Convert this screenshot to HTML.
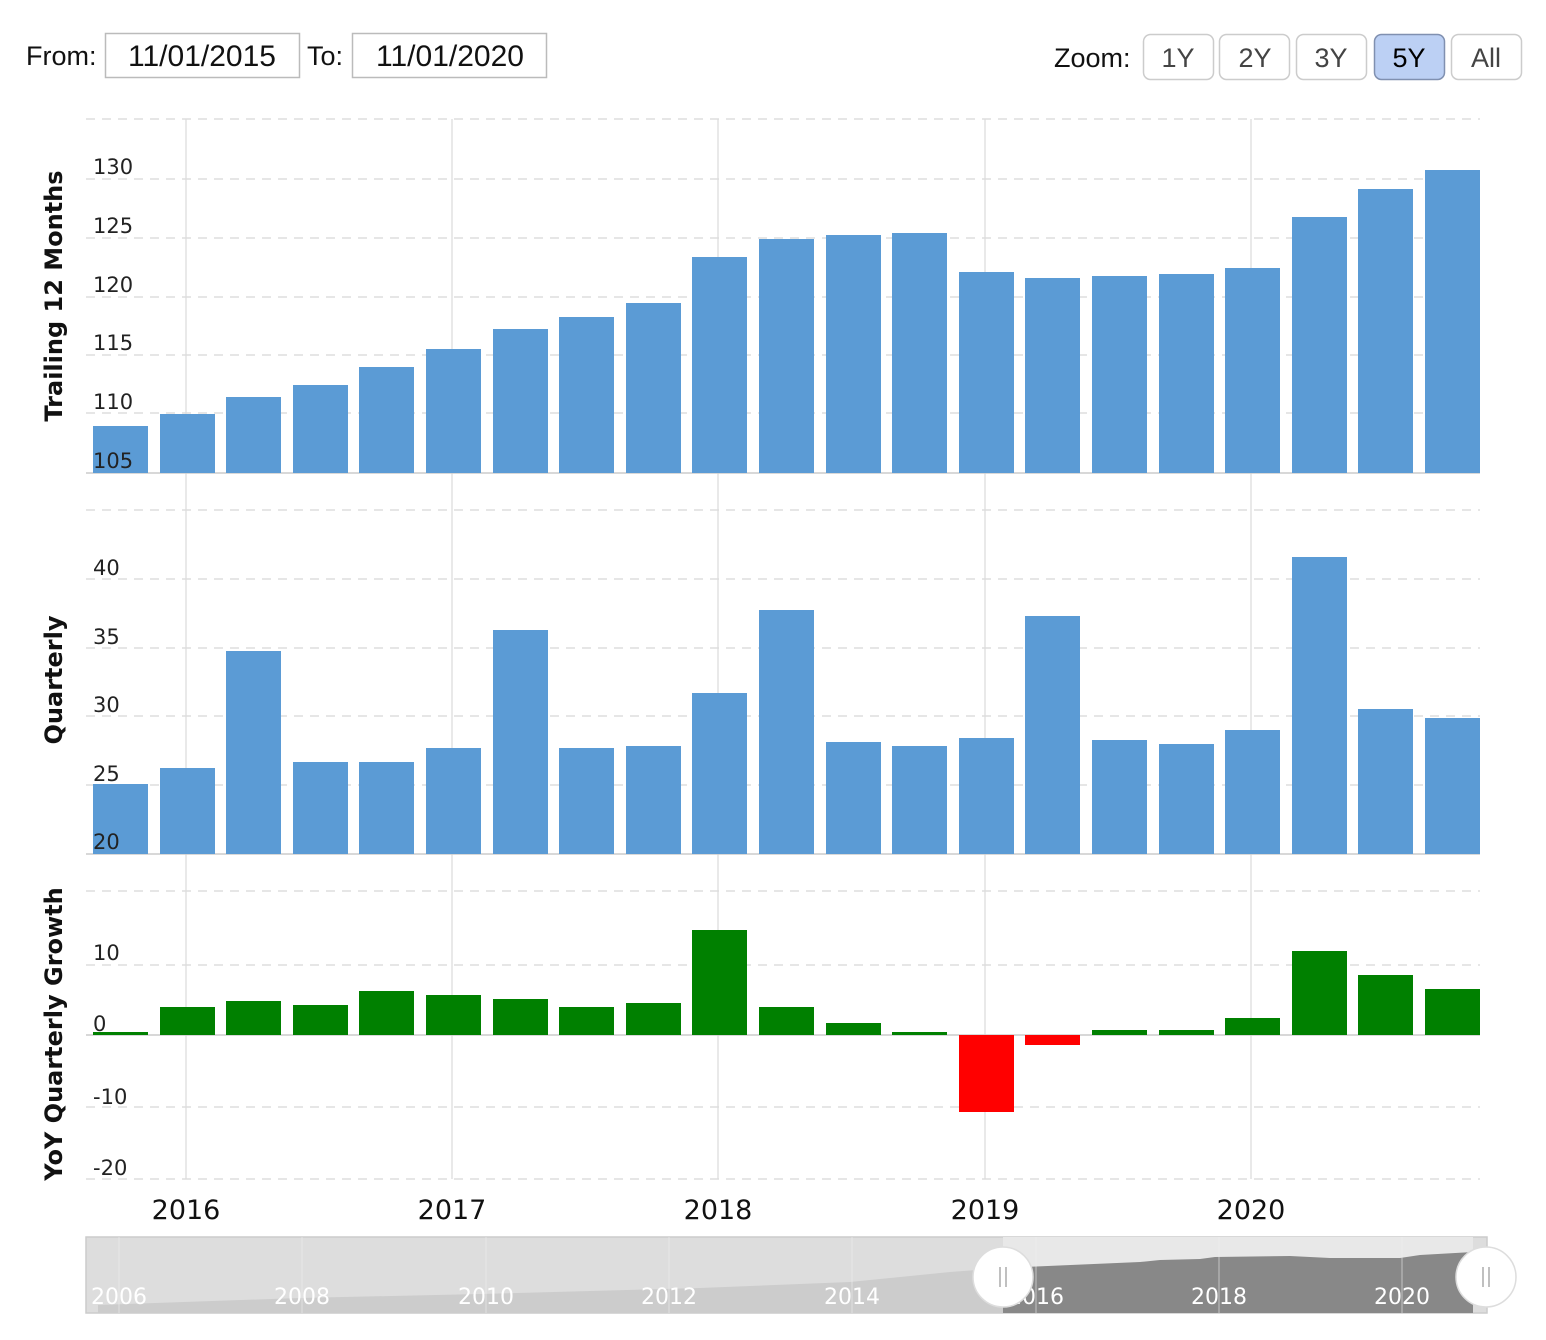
<!DOCTYPE html>
<html><head><meta charset="utf-8"><style>
html,body{margin:0;padding:0;background:#fff;width:1546px;height:1340px;overflow:hidden}
svg{display:block}
</style></head><body>
<svg width="1546" height="1340" xmlns="http://www.w3.org/2000/svg" font-family="'DejaVu Sans',Verdana,sans-serif">
<g font-family="'Liberation Sans',Arial,sans-serif" font-size="27">
<text x="26" y="65" fill="#111">From:</text>
<rect x="105.5" y="33.5" width="194" height="44" fill="#fff" stroke="#bbb" stroke-width="1.5"/>
<text x="202" y="66" text-anchor="middle" fill="#111" font-size="30">11/01/2015</text>
<text x="307" y="65" fill="#111">To:</text>
<rect x="352.5" y="33.5" width="194" height="44" fill="#fff" stroke="#bbb" stroke-width="1.5"/>
<text x="450" y="66" text-anchor="middle" fill="#111" font-size="30">11/01/2020</text>
<text x="1054" y="67" fill="#111">Zoom:</text>
<g stroke="#ccc" stroke-width="1.5" fill="#fff">
<rect x="1143.5" y="34.5" width="70" height="45" rx="7"/>
<rect x="1219.5" y="34.5" width="70" height="45" rx="7"/>
<rect x="1296.5" y="34.5" width="70" height="45" rx="7"/>
<rect x="1374.5" y="34.5" width="70" height="45" rx="7" fill="#bcd0f4" stroke="#8090b0"/>
<rect x="1451.5" y="34.5" width="70" height="45" rx="7"/>
</g>
<g text-anchor="middle" fill="#444">
<text x="1178" y="67">1Y</text><text x="1255" y="67">2Y</text><text x="1331" y="67">3Y</text>
<text x="1409" y="67" fill="#000">5Y</text><text x="1486" y="67">All</text>
</g>
</g>
<g stroke="#e2e2e2" stroke-width="1.5">
<line x1="186" y1="119" x2="186" y2="1179"/><line x1="452" y1="119" x2="452" y2="1179"/>
<line x1="718" y1="119" x2="718" y2="1179"/><line x1="985" y1="119" x2="985" y2="1179"/>
<line x1="1251" y1="119" x2="1251" y2="1179"/>
</g>
<g stroke="#ddd" stroke-width="1.5" stroke-dasharray="9,7">
<line x1="86" y1="119" x2="1480" y2="119"/><line x1="86" y1="179" x2="1480" y2="179"/>
<line x1="86" y1="238" x2="1480" y2="238"/><line x1="86" y1="297" x2="1480" y2="297"/>
<line x1="86" y1="355" x2="1480" y2="355"/><line x1="86" y1="413" x2="1480" y2="413"/>
<line x1="86" y1="510" x2="1480" y2="510"/><line x1="86" y1="579" x2="1480" y2="579"/>
<line x1="86" y1="648" x2="1480" y2="648"/><line x1="86" y1="716" x2="1480" y2="716"/>
<line x1="86" y1="785" x2="1480" y2="785"/>
<line x1="86" y1="891" x2="1480" y2="891"/><line x1="86" y1="965" x2="1480" y2="965"/>
<line x1="86" y1="1107" x2="1480" y2="1107"/><line x1="86" y1="1179" x2="1480" y2="1179"/>
</g>
<g stroke="#ccc" stroke-width="1.5"><line x1="86" y1="473" x2="1480" y2="473"/><line x1="86" y1="854" x2="1480" y2="854"/><line x1="86" y1="1035" x2="1480" y2="1035"/></g>
<g fill="#5b9bd5">
<rect x="93" y="426" width="55" height="47"/><rect x="160" y="414" width="55" height="59"/>
<rect x="226" y="397" width="55" height="76"/><rect x="293" y="385" width="55" height="88"/>
<rect x="359" y="367" width="55" height="106"/><rect x="426" y="349" width="55" height="124"/>
<rect x="493" y="329" width="55" height="144"/><rect x="559" y="317" width="55" height="156"/>
<rect x="626" y="303" width="55" height="170"/><rect x="692" y="257" width="55" height="216"/>
<rect x="759" y="239" width="55" height="234"/><rect x="826" y="235" width="55" height="238"/>
<rect x="892" y="233" width="55" height="240"/><rect x="959" y="272" width="55" height="201"/>
<rect x="1025" y="278" width="55" height="195"/><rect x="1092" y="276" width="55" height="197"/>
<rect x="1159" y="274" width="55" height="199"/><rect x="1225" y="268" width="55" height="205"/>
<rect x="1292" y="217" width="55" height="256"/><rect x="1358" y="189" width="55" height="284"/>
<rect x="1425" y="170" width="55" height="303"/>
</g>
<g fill="#5b9bd5">
<rect x="93" y="784" width="55" height="70"/><rect x="160" y="768" width="55" height="86"/>
<rect x="226" y="651" width="55" height="203"/><rect x="293" y="762" width="55" height="92"/>
<rect x="359" y="762" width="55" height="92"/><rect x="426" y="748" width="55" height="106"/>
<rect x="493" y="630" width="55" height="224"/><rect x="559" y="748" width="55" height="106"/>
<rect x="626" y="746" width="55" height="108"/><rect x="692" y="693" width="55" height="161"/>
<rect x="759" y="610" width="55" height="244"/><rect x="826" y="742" width="55" height="112"/>
<rect x="892" y="746" width="55" height="108"/><rect x="959" y="738" width="55" height="116"/>
<rect x="1025" y="616" width="55" height="238"/><rect x="1092" y="740" width="55" height="114"/>
<rect x="1159" y="744" width="55" height="110"/><rect x="1225" y="730" width="55" height="124"/>
<rect x="1292" y="557" width="55" height="297"/><rect x="1358" y="709" width="55" height="145"/>
<rect x="1425" y="718" width="55" height="136"/>
</g>
<g fill="#008000">
<rect x="93" y="1032" width="55" height="3"/><rect x="160" y="1007" width="55" height="28"/>
<rect x="226" y="1001" width="55" height="34"/><rect x="293" y="1005" width="55" height="30"/>
<rect x="359" y="991" width="55" height="44"/><rect x="426" y="995" width="55" height="40"/>
<rect x="493" y="999" width="55" height="36"/><rect x="559" y="1007" width="55" height="28"/>
<rect x="626" y="1003" width="55" height="32"/><rect x="692" y="930" width="55" height="105"/>
<rect x="759" y="1007" width="55" height="28"/><rect x="826" y="1023" width="55" height="12"/>
<rect x="892" y="1032" width="55" height="3"/>
<rect x="1092" y="1030" width="55" height="5"/><rect x="1159" y="1030" width="55" height="5"/>
<rect x="1225" y="1018" width="55" height="17"/><rect x="1292" y="951" width="55" height="84"/>
<rect x="1358" y="975" width="55" height="60"/><rect x="1425" y="989" width="55" height="46"/>
</g>
<g fill="#ff0000"><rect x="959" y="1035" width="55" height="77"/><rect x="1025" y="1035" width="55" height="10"/></g>
<g font-size="21" fill="#222">
<text x="93" y="174">130</text><text x="93" y="233">125</text><text x="93" y="292">120</text>
<text x="93" y="350">115</text><text x="93" y="409">110</text><text x="93" y="468">105</text>
<text x="93" y="575">40</text><text x="93" y="644">35</text><text x="93" y="712">30</text>
<text x="93" y="781">25</text><text x="93" y="849">20</text>
<text x="93" y="960">10</text><text x="93" y="1031">0</text><text x="93" y="1104">-10</text><text x="93" y="1175">-20</text>
</g>
<g font-size="24" font-weight="bold" fill="#111" text-anchor="middle">
<text transform="translate(62,296) rotate(-90)">Trailing 12 Months</text>
<text transform="translate(62,680) rotate(-90)">Quarterly</text>
<text transform="translate(62,1034) rotate(-90)">YoY Quarterly Growth</text>
</g>
<g font-size="27" fill="#111" text-anchor="middle">
<text x="186" y="1219">2016</text><text x="452" y="1219">2017</text><text x="718" y="1219">2018</text>
<text x="985" y="1219">2019</text><text x="1251" y="1219">2020</text>
</g>
<rect x="86" y="1237" width="1401" height="76" fill="#ddd" stroke="#ccc" stroke-width="1.5"/>
<rect x="1003" y="1237" width="470" height="76" fill="#e8e8e8"/>
<path d="M98 1313 L98 1305 L300 1298 L480 1294 L700 1288 L850 1282 L950 1272 L1003 1268 L1003 1313 Z" fill="#ccc"/>
<path d="M1003 1268 L1140 1262 L1160 1260 L1200 1259 L1215 1257 L1290 1256 L1330 1258 L1400 1258 L1420 1255 L1473 1252 L1473 1313 L1003 1313 Z" fill="#888"/>
<g stroke="#eee" stroke-width="1" opacity="0.6">
<line x1="119" y1="1237" x2="119" y2="1313"/><line x1="302" y1="1237" x2="302" y2="1313"/><line x1="486" y1="1237" x2="486" y2="1313"/>
<line x1="669" y1="1237" x2="669" y2="1313"/><line x1="852" y1="1237" x2="852" y2="1313"/><line x1="1036" y1="1237" x2="1036" y2="1313"/>
<line x1="1219" y1="1237" x2="1219" y2="1313"/><line x1="1402" y1="1237" x2="1402" y2="1313"/>
</g>
<g font-size="22" fill="#fff" text-anchor="middle">
<text x="119" y="1304">2006</text><text x="302" y="1304">2008</text><text x="486" y="1304">2010</text>
<text x="669" y="1304">2012</text><text x="852" y="1304">2014</text><text x="1036" y="1304">2016</text>
<text x="1219" y="1304">2018</text><text x="1402" y="1304">2020</text>
</g>
<g fill="#fff" stroke="#ddd" stroke-width="1.5">
<ellipse cx="1003" cy="1277" rx="30" ry="30"/><ellipse cx="1486" cy="1277" rx="30" ry="30"/>
</g>
<g stroke="#aaa" stroke-width="1.5">
<line x1="1000" y1="1267" x2="1000" y2="1287"/><line x1="1006" y1="1267" x2="1006" y2="1287"/>
<line x1="1483" y1="1267" x2="1483" y2="1287"/><line x1="1489" y1="1267" x2="1489" y2="1287"/>
</g>
</svg>
</body></html>
